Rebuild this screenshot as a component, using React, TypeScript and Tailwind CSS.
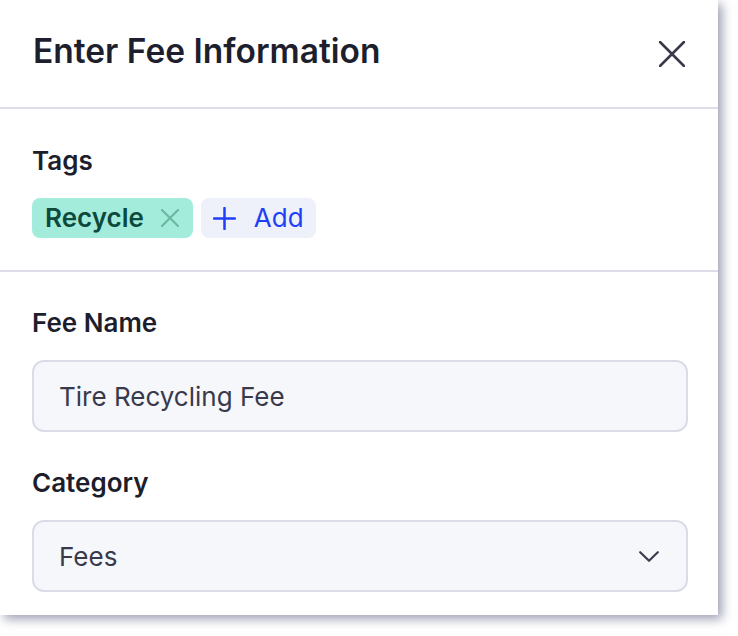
const font = { fontFamily: "Inter, 'Noto Sans', sans-serif" };

function Label({ children }: { children: React.ReactNode }) {
  return <div className="text-[26px] leading-[30px] font-semibold text-[#1d1e2c]">{children}</div>;
}

function Cross({ size, stroke, className }: { size: number; stroke: number; className?: string }) {
  return (
    <svg width={size} height={size} viewBox={`0 0 ${size} ${size}`} className={className} fill="none">
      <path d={`M1 1L${size - 1} ${size - 1}M${size - 1} 1L1 ${size - 1}`} stroke="currentColor" strokeWidth={stroke} strokeLinecap="round" />
    </svg>
  );
}

export default function App() {
  return (
    <div className="min-h-screen bg-white" style={font}>
      <div className="w-[718px] h-[615px] bg-white overflow-hidden shadow-[4px_4px_10px_rgba(90,95,130,0.6)] flex flex-col">
        <div className="h-[109px] shrink-0 flex items-center justify-between pl-[33px] pr-[33px] border-b-2 border-[#dcdde8]">
          <h1 className="-mt-[6px] text-[33.5px] leading-[40px] font-semibold text-[#1e1f2e]">Enter Fee Information</h1>
          <Cross size={26} stroke={2.6} className="text-[#3a3b4a]" />
        </div>

        <div className="shrink-0 pl-[32px] pt-[37px] pb-[32px] border-b-2 border-[#dcdde8]">
          <Label>Tags</Label>
          <div className="flex gap-2 mt-[22px]">
            <div className="h-[40px] flex items-center gap-[17px] pl-[13px] pr-[14px] rounded-[8px] bg-[#a3ecdc]">
              <span className="text-[26px] leading-[30px] font-semibold text-[#0d4a3c]">Recycle</span>
              <Cross size={18} stroke={2.2} className="text-[#6bb8a2]" />
            </div>
            <div className="h-[40px] flex items-center gap-[18px] pl-[12px] pr-[12px] rounded-[8px] bg-[#eef0fa]">
              <svg width="23" height="23" viewBox="0 0 23 23" fill="none" className="text-[#1f3ef5]">
                <path d="M11.5 1V22M1 11.5H22" stroke="currentColor" strokeWidth="2.5" strokeLinecap="round" />
              </svg>
              <span className="text-[26px] leading-[30px] text-[#1f3ef5]">Add</span>
            </div>
          </div>
        </div>

        <div className="pl-[32px] pr-[30px] pt-[36px] flex flex-col">
          <Label>Fee Name</Label>
          <div className="mt-[22px] h-[72px] rounded-[12px] border-2 border-[#dadce8] bg-[#f6f7fb] flex items-center px-[25px]">
            <span className="text-[26px] text-[#383a4c]">Tire Recycling Fee</span>
          </div>
          <div className="mt-[36px]">
            <Label>Category</Label>
          </div>
          <div className="mt-[22px] h-[72px] rounded-[12px] border-2 border-[#dadce8] bg-[#f6f7fb] flex items-center justify-between pl-[25px] pr-[27px]">
            <span className="text-[26px] text-[#383a4c]">Fees</span>
            <svg width="20" height="11" viewBox="0 0 20 11" fill="none" className="text-[#3c3d4e]">
              <path d="M1.2 1.2L10 9.8L18.8 1.2" stroke="currentColor" strokeWidth="2.2" strokeLinecap="round" strokeLinejoin="round" />
            </svg>
          </div>
        </div>
      </div>
    </div>
  );
}
